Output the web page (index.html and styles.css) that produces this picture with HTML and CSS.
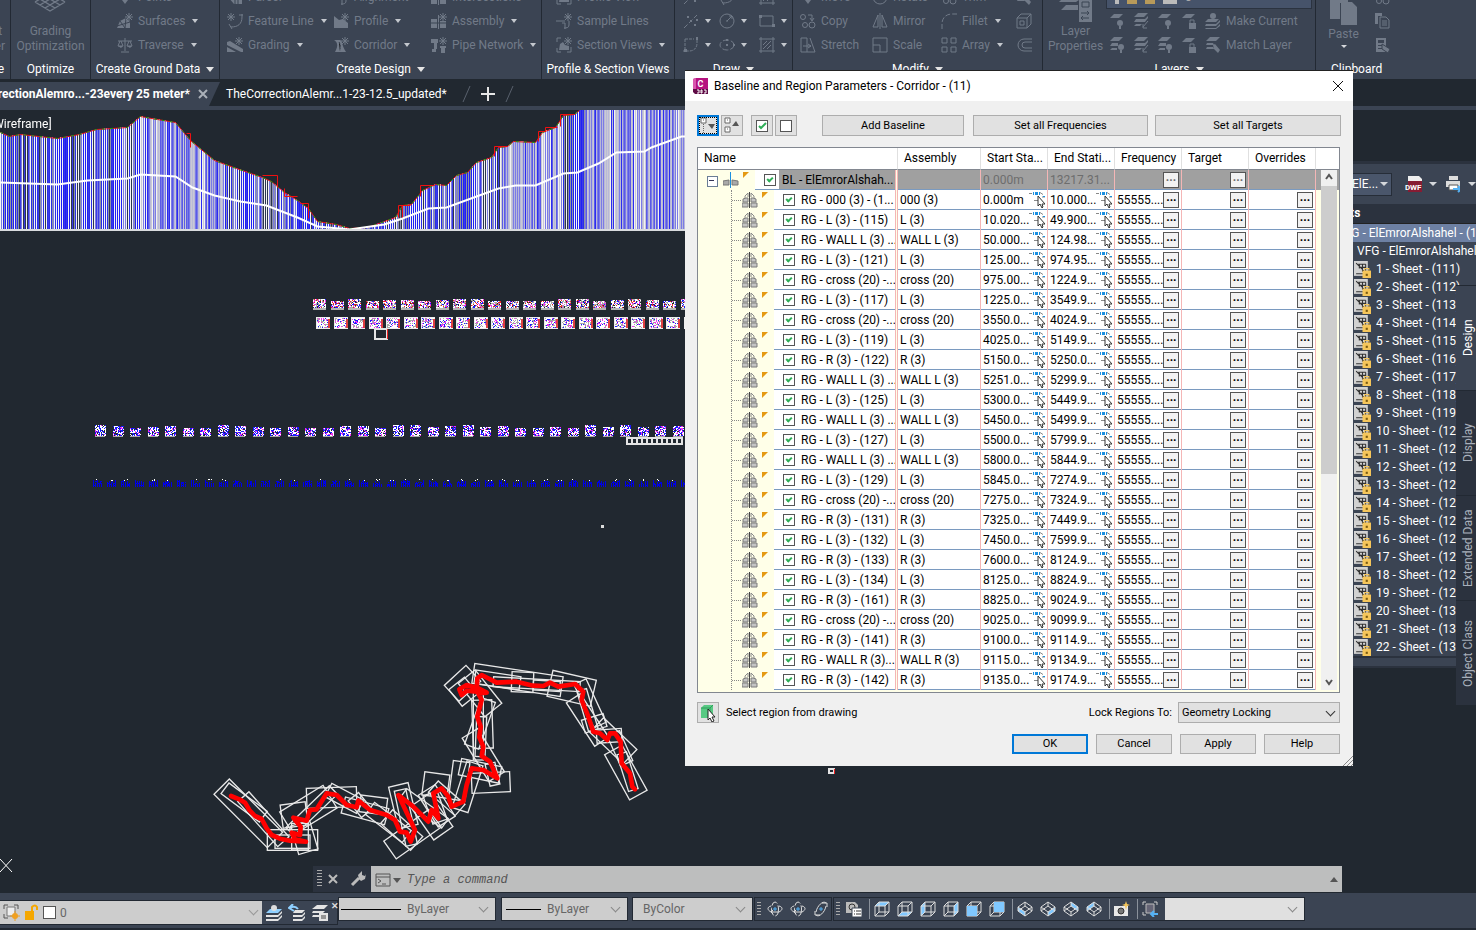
FILE: index.html
```html
<!DOCTYPE html>
<html lang="en">
<head>
<meta charset="utf-8">
<title>Baseline and Region Parameters - Corridor - (11)</title>
<link rel="stylesheet" href="styles.css">
</head>
<body>
<svg class="defs" aria-hidden="true">
  <defs>
    <symbol id="star" viewBox="0 0 8 8"><path d="M4 0v8M0 4h8M1 1l6 6M7 1l-6 6" stroke="currentColor" fill="none"/></symbol>
    <symbol id="grid3d" viewBox="0 0 32 16"><path d="M1 4L16 13 31 4M6 1l15 9M11-2l15 9M26 1L11 10M21-2L6 7M1 4l5-3M31 4l-5-3" stroke="currentColor" fill="none" stroke-width="1.4"/></symbol>
    <symbol id="points" viewBox="0 0 16 16"><path d="M8 15l-3-4V4h6v7z" fill="currentColor"/></symbol>
    <symbol id="surf" viewBox="0 0 16 16"><path d="M0 15l3-7 6-3 4 4v6z" fill="currentColor"/><path d="M3 8l5 7 1-10M0 13l13-4" stroke="#3b4453" fill="none"/><use href="#star" x="8" y="0" width="8" height="8"/></symbol>
    <symbol id="trav" viewBox="0 0 16 16"><path d="M8 1v13M4 15h8M1 4h14M3 4L1 9h5L4 4M12 4l-2 5h5l-2-5" stroke="currentColor" fill="none"/><path d="M1 9h5l-2 2zM10 9h5l-2 2z" fill="currentColor"/></symbol>
    <symbol id="parcel" viewBox="0 0 16 16"><path d="M1 8l6 7h8V5H4z" fill="currentColor"/><path d="M8 5v10M11 5v10" stroke="#3b4453"/></symbol>
    <symbol id="feat" viewBox="0 0 16 16"><path d="M15 1v3c0 7-4 10-11 10M12 2h4M2 11l3 5" stroke="currentColor" fill="none"/><use href="#star" x="0" y="0" width="8" height="8"/></symbol>
    <symbol id="grad" viewBox="0 0 16 16"><path d="M0 5l3-1 13 8v3h-2L0 8zM0 10l9 5H0z" fill="currentColor"/><use href="#star" x="8" y="0" width="8" height="8"/></symbol>
    <symbol id="prof" viewBox="0 0 16 16"><path d="M1 3l5 4 4-1 5 4v5H1z" fill="currentColor"/><use href="#star" x="8" y="0" width="8" height="8"/></symbol>
    <symbol id="corr" viewBox="0 0 16 16"><path d="M1 3h6c3 1 1 4 6 12H2C6 8 4 5 1 3z" fill="currentColor"/><path d="M6 5c2 3 1 5 1 9" stroke="#3b4453" stroke-dasharray="2 1"/><use href="#star" x="8" y="0" width="8" height="8"/></symbol>
    <symbol id="assy" viewBox="0 0 16 16"><path d="M0 6h6v9H0zM9 8h6v7H9zM7 2h1v14H7z" fill="currentColor"/><path d="M0 10h15" stroke="#3b4453"/><use href="#star" x="8" y="0" width="8" height="8"/></symbol>
    <symbol id="pipe" viewBox="0 0 16 16"><path d="M0 2h7v4H6v6H5v3H1v-3h2V6H0zM9 9h6v2h-1v5h-4v-5H9z" fill="currentColor"/><use href="#star" x="8" y="0" width="8" height="8"/></symbol>
    <symbol id="samp" viewBox="0 0 16 16"><path d="M0 8h9M13 8v4c0 3-3 3-5 3M6 10h3v6" stroke="currentColor" fill="none"/><use href="#star" x="8" y="0" width="8" height="8"/></symbol>
    <symbol id="sect" viewBox="0 0 16 16"><path d="M1 5V1h4M1 11v4h4M15 10v5h-4" stroke="currentColor" fill="none"/><path d="M3 13l1-6 3-2 2 3 4 1v4z" fill="currentColor"/><use href="#star" x="8" y="0" width="8" height="8"/></symbol>
    <symbol id="xline" viewBox="0 0 16 16"><path d="M1 15L14 2" stroke="currentColor" stroke-dasharray="5 2"/><path d="M4 3h2v2H4zM11 11h2v2h-2zM7 7h2v2H7zM13 6h2v2h-2z" fill="currentColor"/></symbol>
    <symbol id="circ" viewBox="0 0 16 16"><circle cx="8" cy="8" r="7" stroke="currentColor" fill="none"/><path d="M8 8l5-5M7 8h2M10 3h3v3" stroke="currentColor" fill="none"/></symbol>
    <symbol id="rect" viewBox="0 0 16 16"><path d="M1 3h13v10H1z" stroke="currentColor" fill="none"/><path d="M0 2h3v3H0zM13 11h3v3h-3z" fill="currentColor"/></symbol>
    <symbol id="arc" viewBox="0 0 16 16"><path d="M2 2h9M2 2v12M14 3v3c0 5-3 8-8 8H0" stroke="currentColor" fill="none" stroke-dasharray="3 1"/><path d="M13 0h2v3h-2zM1 12h3v3H1z" fill="currentColor"/></symbol>
    <symbol id="elli" viewBox="0 0 16 16"><ellipse cx="8" cy="8" rx="7" ry="5" stroke="currentColor" fill="none" stroke-dasharray="6 2"/><path d="M7 7h2v2H7zM7 2h2v2H7zM14 7h2v2h-2z" fill="currentColor"/></symbol>
    <symbol id="hatch" viewBox="0 0 16 16"><path d="M2 0v16M14 0v16M0 2h16M0 14h16M4 8l4-4M4 12l8-8M8 12l4-4" stroke="currentColor" fill="none"/></symbol>
    <symbol id="copy" viewBox="0 0 16 16"><circle cx="3" cy="4" r="2.500" stroke="currentColor" fill="none"/><circle cx="5" cy="12" r="2.500" stroke="currentColor" fill="none"/><circle cx="12" cy="12" r="3" stroke="currentColor" fill="none"/><path d="M8 2h4v5M10 5l2 3 2-3" stroke="currentColor" fill="none"/></symbol>
    <symbol id="stre" viewBox="0 0 16 16"><path d="M1 1h6v14H1zM10 1l5 14H7M3 9h8M8 7l3 2-3 2" stroke="currentColor" fill="none"/></symbol>
    <symbol id="mirr" viewBox="0 0 16 16"><path d="M6 2v12H1zM10 2v12h5zM8 0v16" stroke="currentColor" fill="none"/></symbol>
    <symbol id="scale" viewBox="0 0 16 16"><path d="M1 8V1h14v14H8M1 8h7v7H1z" stroke="currentColor" fill="none"/></symbol>
    <symbol id="fill" viewBox="0 0 16 16"><path d="M1 16v-5C1 5 5 1 11 1h5" stroke="currentColor" fill="none" stroke-dasharray="5 2"/></symbol>
    <symbol id="arr" viewBox="0 0 16 16"><path d="M1 1h5v5H1zM10 1h5v5h-5zM1 10h5v5H1zM10 10h5v5h-5z" stroke="currentColor" fill="none"/></symbol>
    <symbol id="box" viewBox="0 0 16 16"><path d="M1 5h10v10H1zM4 8h4v4H4zM1 5l4-4h10v10l-4 4M11 5l4-4" stroke="currentColor" fill="none"/></symbol>
    <symbol id="offs" viewBox="0 0 16 16"><path d="M16 2H8a6 6 0 000 12h8M16 5H9a3 3 0 000 6h7" stroke="currentColor" fill="none"/></symbol>
    <symbol id="lay" viewBox="0 0 16 16"><path d="M5 1h9l-4 4H1z" fill="currentColor"/><circle cx="11" cy="10" r="3" fill="currentColor"/><path d="M10 13h2v3h-2z" fill="currentColor"/></symbol>
    <symbol id="lays" viewBox="0 0 16 16"><path d="M5 0h10l-4 4H1zM3 6h9l3-3v2l-3 4H1zM3 11h6l-2 2H1z" fill="currentColor"/><path d="M15 8l-5 6M10 11v4h4" stroke="currentColor" fill="none"/></symbol>
    <symbol id="layb" viewBox="0 0 16 16"><path d="M5 0h9l-4 4H1zM3 6h6v3H1zM3 11h5v2H1z" fill="currentColor"/><circle cx="12" cy="10" r="3" fill="currentColor"/><path d="M11 13h2v3h-2z" fill="currentColor"/></symbol>
    <symbol id="lock" viewBox="0 0 16 16"><path d="M5 1h9l-4 4H1zM8 10h7v6H8z" fill="currentColor"/><path d="M9 10V7h4v3" stroke="currentColor" fill="none"/></symbol>
    <symbol id="mkc" viewBox="0 0 16 16"><circle cx="8" cy="3" r="3" fill="currentColor"/><path d="M3 6h11l-3 3H0zM1 11h10l4-4v2l-4 4H0zM1 15h10l4-4v2l-4 3H0z" fill="currentColor"/></symbol>
    <symbol id="match" viewBox="0 0 16 16"><path d="M5 0h10l-4 4H1zM2 6h6l1 2H1zM2 10h6l1 2H1zM8 8l2-1 5 6-2 3-4-4z" fill="currentColor"/></symbol>
    <symbol id="page" viewBox="0 0 16 16"><path d="M1 0h7v3H4v8H1z" fill="currentColor"/><path d="M6 4h6l3 3v8H6zM8 8h5M8 10h5M8 12h5" stroke="currentColor" fill="none"/></symbol>
    <symbol id="mprop" viewBox="0 0 16 16"><path d="M2 1h10v14H2zM4 3v3h6V3zM4 8v1h6V8zM4 11v1h4v-1z" fill="currentColor" fill-rule="evenodd"/><path d="M8 7l8 5-2 4-6-4z" fill="currentColor" stroke="#3b4453"/></symbol>
    <symbol id="lprop" viewBox="0 0 34 28"><path d="M6-4h14v8l-3 2H0l6-6zM2 14l5-5h12v5zM20 3h13v23H20z" fill="currentColor"/><path d="M23 6h7v5h-7zM22 17h8M28 15l2 2-2 2M30 22h-8M24 20l-2 2 2 2" stroke="#3b4453" fill="none"/></symbol>
    <symbol id="paste" viewBox="0 0 28 28"><path d="M0-4h18v8h-8v16H0zM11 3h11l5 5v18H11z" fill="currentColor"/></symbol>
    <symbol id="asm" viewBox="0 0 16 16"><path d="M1 7l3-1h2v4H1zM0 11h6v4H0zM9 6h2l3 1v3H9zM9 11h6v4H9z" fill="#c4c4c4" stroke="#7c7c7c"/><path d="M3 6V4l3-3v4M12 6V4L9 1v4" fill="none" stroke="#8a8a8a"/><path d="M7.500 0v16" stroke="#444"/></symbol>
    <symbol id="bl" viewBox="0 0 16 16"><path d="M0 9l6-1v5H0zM9 8l6 1v4H9z" fill="#a9a9a9" stroke="#777"/><path d="M7.500 0v16" stroke="#1b8fe0"/></symbol>
    <symbol id="pick" viewBox="0 0 16 17"><path d="M0 2.500h3M13 6h3M11 1.500l3 2M5 9.500h4" stroke="#888"/><path d="M4 1h1v3H4zM6 1h3v3H6zM10 1h1v3h-1zM14 5h2v1h-2z" fill="#1b8fe0"/><path d="M9 5v10l2-2 2 4 1-1-1-3h3z" fill="#fff" stroke="#333"/></symbol>
    <symbol id="orbit" viewBox="0 0 16 16"><ellipse cx="8" cy="8" rx="3.500" ry="7" fill="none" stroke="#ddd" stroke-dasharray="8 2"/><path d="M4 5C0 6 0 9 4 11l8 0c4-2 4-5 0-6M6 13l-2-2 2-2" fill="none" stroke="#ddd"/><path d="M8 6v4M6 8h4" stroke="#55b2f5"/></symbol>
    <symbol id="orbit2" viewBox="0 0 16 16"><path d="M13 2C10-1 4 5 3 11M3 14c3 3 9-3 10-9M9 2h5v4M7 14H2v-4" fill="none" stroke="#ddd"/><path d="M8 6v4M6 8h4" stroke="#55b2f5"/></symbol>
    <symbol id="cube" viewBox="0 0 16 16"><path d="M1 5h10v10H1zM5 1h10v10H5zM1 5l4-4M11 5l4-4M1 15l4-4M11 15l4-4" fill="none" stroke="#ddd"/></symbol>
    <symbol id="iso" viewBox="0 0 16 16"><path d="M8 1l7 5v4l-7 5-7-5V6zM1 6l7 5 7-5M8 11v4M8 1v4L1 10M8 5l7 5" fill="none" stroke="#ddd"/></symbol>
    <symbol id="sheet" viewBox="0 0 16 16"><path d="M0 0h13v14H0z" fill="#d2d2d2"/><path d="M2 2l9 9M11 3v9H2M4 3h7M5 3v4M8 3v7M5 6h6" stroke="#333" fill="none"/><path d="M8 9h8v7H8z" fill="#f6c65a"/><path d="M10 9V7h4v2" stroke="#f6c65a" fill="none"/><path d="M11 12h2v2h-2z" fill="#7a5a10"/></symbol>
    <symbol id="stack" viewBox="0 0 18 18"><path d="M5 5h12l-4 4H1z" fill="#8fd0ff"/><path d="M1 11h12l4-4v2l-4 4H1zM1 15h12l4-4v2l-4 4H1z" fill="#e4e4e4"/></symbol>
  </defs>
</svg>

<div class="app">
<header class="ribbon">
  <section class="panel p-explore">
    <div class="body"><button class="big">Project<br>Explorer</button></div><h2>Explore</h2>
  </section>
  <section class="panel p-opt">
    <div class="body"><button class="big"><svg width="32" height="16"><use href="#grid3d"/></svg><span class="cap">Grading<br>Optimization</span></button></div><h2>Optimize</h2>
  </section>
  <section class="panel p-ground">
    <div class="body"><div class="col"><button class="it"><svg><use href="#points"/></svg>Points</button><button class="it more"><svg><use href="#surf"/></svg>Surfaces</button><button class="it more"><svg><use href="#trav"/></svg>Traverse</button></div></div><h2 class="drop">Create Ground Data</h2>
  </section>
  <section class="panel p-design">
    <div class="body">
      <div class="col c1"><button class="it more"><svg><use href="#parcel"/></svg>Parcel</button><button class="it more"><svg><use href="#feat"/></svg>Feature Line</button><button class="it more"><svg><use href="#grad"/></svg>Grading</button></div>
      <div class="col c2"><button class="it more"><svg><use href="#samp"/></svg>Alignment</button><button class="it more"><svg><use href="#prof"/></svg>Profile</button><button class="it more"><svg><use href="#corr"/></svg>Corridor</button></div>
      <div class="col"><button class="it"><svg><use href="#assy"/></svg>Intersections</button><button class="it more"><svg><use href="#assy"/></svg>Assembly</button><button class="it more"><svg><use href="#pipe"/></svg>Pipe Network</button></div>
    </div><h2 class="drop">Create Design</h2>
  </section>
  <section class="panel p-views">
    <div class="body"><div class="col"><button class="it"><svg><use href="#sect"/></svg>Profile View</button><button class="it"><svg><use href="#samp"/></svg>Sample Lines</button><button class="it more"><svg><use href="#sect"/></svg>Section Views</button></div></div><h2>Profile &amp; Section Views</h2>
  </section>
  <section class="panel p-draw">
    <div class="body">
      <div class="col d1"><button class="it more" aria-label="Line"><svg><use href="#xline"/></svg></button><button class="it more" aria-label="Construction line"><svg><use href="#xline"/></svg></button><button class="it more" aria-label="Arc"><svg><use href="#arc"/></svg></button></div>
      <div class="col d2"><button class="it" aria-label="Polyline"><svg><use href="#feat"/></svg></button><button class="it more" aria-label="Circle"><svg><use href="#circ"/></svg></button><button class="it more" aria-label="Ellipse"><svg><use href="#elli"/></svg></button></div>
      <div class="col"><button class="it" aria-label="Table"><svg><use href="#hatch"/></svg></button><button class="it more" aria-label="Rectangle"><svg><use href="#rect"/></svg></button><button class="it more" aria-label="Hatch"><svg><use href="#hatch"/></svg></button></div>
    </div><h2 class="drop">Draw</h2>
  </section>
  <section class="panel p-modify">
    <div class="body">
      <div class="col m1"><button class="it"><svg><use href="#points"/></svg>Move</button><button class="it"><svg><use href="#copy"/></svg>Copy</button><button class="it"><svg><use href="#stre"/></svg>Stretch</button></div>
      <div class="col m2"><button class="it"><svg><use href="#circ"/></svg>Rotate</button><button class="it"><svg><use href="#mirr"/></svg>Mirror</button><button class="it"><svg><use href="#scale"/></svg>Scale</button></div>
      <div class="col m3"><button class="it more"><svg><use href="#copy"/></svg>Trim</button><button class="it more"><svg><use href="#fill"/></svg>Fillet</button><button class="it more"><svg><use href="#arr"/></svg>Array</button></div>
      <div class="col"><button class="it" aria-label="Erase"><svg><use href="#match"/></svg></button><button class="it" aria-label="Explode"><svg><use href="#box"/></svg></button><button class="it" aria-label="Offset"><svg><use href="#offs"/></svg></button></div>
    </div><h2 class="drop">Modify</h2>
  </section>
  <section class="panel p-layers">
    <div class="body">
      <button class="big lp"><svg width="34" height="28"><use href="#lprop"/></svg><span>Layer<br>Properties</span></button>
      <div class="layers">
        <div class="lcombo"><i class="bulb"></i><i class="sun"></i><i class="lk"></i><i class="sw"></i>0</div>
        <div class="lrow"><svg><use href="#lay"/></svg><svg><use href="#lays"/></svg><svg><use href="#lay"/></svg><svg><use href="#lock"/></svg><button class="it"><svg><use href="#mkc"/></svg>Make Current</button></div>
        <div class="lrow"><svg><use href="#layb"/></svg><svg><use href="#lays"/></svg><svg><use href="#layb"/></svg><svg><use href="#lock"/></svg><button class="it"><svg><use href="#match"/></svg>Match Layer</button></div>
      </div>
    </div><h2 class="drop">Layers</h2>
  </section>
  <section class="panel p-clip">
    <div class="body">
      <button class="big paste"><svg width="28" height="28"><use href="#paste"/></svg><span>Paste</span><i class="caret"></i></button>
      <div class="col"><button class="it" aria-label="Cut"><svg><use href="#copy"/></svg></button><button class="it" aria-label="Copy"><svg><use href="#page"/></svg></button><button class="it" aria-label="Match properties"><svg><use href="#mprop"/></svg></button></div>
    </div><h2>Clipboard</h2>
  </section>
</header>

<nav class="tabs">
  <div class="tab on"><span>TheCorrectionAlemro...-23every 25 meter*</span><button aria-label="Close tab"><svg width="10" height="10"><path d="M1 1l8 8M9 1L1 9" stroke="#aab0b8" stroke-width="2"/></svg></button></div>
  <svg class="slope" width="12" height="24"><path d="M0 0h11L0 24z" fill="#3b4453"/></svg>
  <a class="tab2" href="#">TheCorrectionAlemr...1-23-12.5_updated*</a>
  <svg width="52" height="24"><path d="M8 4L1 20M51 4l-7 16" stroke="#59616d"/><path d="M26 5v14M19 12h14" stroke="#e6e6e6" stroke-width="2"/></svg>
</nav>

<main class="work">
  <canvas id="view" width="1340" height="756"></canvas>
  <svg class="route" id="route" width="460" height="210" viewBox="0 0 1380 630"></svg>
  <span class="wire">[Wireframe]</span>
  <svg class="ucs" width="13" height="14"><path d="M0 0l12 13M12 0L0 13" stroke="#fff"/></svg>
  <aside class="space">
    <div class="stool"><div class="scombo"><span>ElE...</span><i class="caret"></i></div>
      <svg width="18" height="18"><path d="M1 1h11l4 4v4H1z" fill="#eee"/><path d="M1 6h16v11H1z" fill="#861c33"/></svg><b class="dwf">DWF</b><i class="caret"></i>
      <svg width="18" height="18"><path d="M4 1h9v4H4zM1 6h15v6H1z" fill="#ddd"/><path d="M4 10h9v5H4z" fill="#fff" stroke="#555"/><path d="M8 14h8M13 11l3 3-3 3" stroke="#55b2f5" stroke-width="2" fill="none"/></svg><i class="caret"></i></div>
    <div class="shead">Sheets</div>
    <ul id="sheets"><li class="cur">VFG - ElEmrorAlshahel - (11)</li><li class="vfg">VFG - ElEmrorAlshahel</li></ul>
    <div class="sfoot"></div>
  </aside>
  <div class="vtabs"><button>Design</button><button>Display</button><button>Extended Data</button><button>Object Class</button></div>
  <div class="cmd">
    <div class="cmdl"><i class="grip"></i><svg width="10" height="10"><path d="M1 1l8 8M9 1L1 9" stroke="#bbb" stroke-width="2"/></svg><svg width="16" height="16"><path d="M2 14l7-7" stroke="#bbb" stroke-width="3"/><path d="M9 8L8 4l4-4v4l3 1 1-2-1 5-4 2z" fill="#bbb"/></svg></div>
    <label class="cmdr"><svg width="26" height="14"><path d="M1 1h14v12H1zM1 4h14M3 6l3 2-3 2M7 11h4" fill="none" stroke="#555"/><path d="M18 5h8l-4 5z" fill="#555"/></svg><input type="text" placeholder="Type a command" aria-label="Command"><i class="up"></i></label>
  </div>
</main>

<footer class="bar">
  <div class="lbar">
    <div class="lsel"><svg width="17" height="17"><path d="M1 5V1h4M11 1h4v4M1 10v4h4" fill="none" stroke="#555"/><path d="M4 3h8v9H4z" fill="#eee" stroke="#777"/><circle cx="12" cy="12" r="3" fill="#f0a020"/><path d="M12 7v10M7 12h10" stroke="#f0a020"/></svg><svg width="15" height="17"><path d="M1 7h9v9H1z" fill="#f5a700"/><path d="M8 7V3q3-3 5 0v3" fill="none" stroke="#f5a700" stroke-width="2"/></svg><i class="sq"></i><span>0</span><i class="chev"></i></div>
    <svg width="18" height="18"><use href="#stack"/><circle cx="9" cy="4" r="3" fill="#ddd"/></svg><svg width="18" height="18"><path d="M7 6h10l-3 3H5zM5 11h9l3-3v2l-3 3H5zM5 15h9l3-3v2l-3 3H5z" fill="#e4e4e4"/><path d="M10 5Q7 1 2 4M5 0L1 4l5 3" fill="none" stroke="#8fd0ff" stroke-width="2"/></svg><svg width="18" height="18"><path d="M6 1h11l-4 4H1zM2 7h12l-2 2H1zM2 11h6v2H1zM8 9h9v8H8z" fill="#e4e4e4"/><path d="M10 12h5M10 14h5" stroke="#444"/></svg><b class="x">✕</b>
  </div>
  <label class="sel s1"><i class="line"></i><select aria-label="Linetype"><option>ByLayer</option></select></label>
  <label class="sel s2"><i class="line"></i><select aria-label="Lineweight"><option>ByLayer</option></select></label>
  <label class="sel s3"><select aria-label="Plot style"><option>ByColor</option></select></label>
  <div class="tools">
    <i class="grip"></i><svg><use href="#orbit"/></svg><svg><use href="#orbit"/></svg><svg><use href="#orbit2"/></svg></div>
  <div class="tools t2">
    <i class="grip"></i><svg><path d="M0 1h9l3 3v8H0z" fill="#bbb"/><circle cx="6" cy="6" r="3" fill="none" stroke="#333"/><path d="M6 7h10v9H6z" fill="#fff" stroke="#3b4453"/><path d="M8 10h1M10 10h5M8 13h1M10 13h5" stroke="#333"/></svg><i class="sep"></i>
    <svg><path d="M1 5l4-4h10l-4 4z" fill="#80c8ff"/><use href="#cube"/></svg><svg><path d="M1 15l4-4h10l-4 4z" fill="#80c8ff"/><use href="#cube"/></svg><svg><path d="M1 5l4-4v10l-4 4z" fill="#80c8ff"/><use href="#cube"/></svg><svg><path d="M11 5l4-4v10l-4 4z" fill="#80c8ff"/><use href="#cube"/></svg><svg><use href="#cube"/><path d="M1 5h10v10H1z" fill="#80c8ff"/></svg><svg><use href="#cube"/><path d="M5 1h10v10H5z" fill="#80c8ff"/></svg><i class="sep"></i>
    <svg><path d="M1 6l7 5v4l-7-5z" fill="#80c8ff"/><use href="#iso"/></svg><svg><path d="M15 6l-7 5v4l7-5z" fill="#80c8ff"/><use href="#iso"/></svg><svg><path d="M8 1l7 5v4L8 5z" fill="#80c8ff"/><use href="#iso"/></svg><svg><path d="M8 1L1 6v4l7-5z" fill="#80c8ff"/><use href="#iso"/></svg><i class="sep"></i>
    <svg><path d="M0 5h14v10H0z" fill="#e8e8e8"/><circle cx="7" cy="10" r="3" fill="#777" stroke="#333"/><path d="M12 0l1 3 3 1-3 1-1 4-1-4-3-1 3-1z" fill="#f6c65a"/></svg><i class="sep"></i>
    <svg><path d="M1 4V1h3M12 1h3v3M1 11v3h3" fill="none" stroke="#ccc"/><path d="M4 3h8v9H4z" fill="#667" stroke="#bbb"/><path d="M16 13H9M12 10l-3 3 3 3" stroke="#55b2f5" stroke-width="2" fill="none"/></svg>
    <label class="sel s4"><select aria-label="View"><option></option></select></label>
  </div>
</footer>
</div>

<div class="dialog" role="dialog" aria-labelledby="dt">
  <div class="title"><svg width="15" height="16"><path d="M0 1l3-1h12v12H0z" fill="#b5127f"/><path d="M0 1l3-1v12H0z" fill="#d957ae"/><path d="M0 11h15v5H2l-2-2z" fill="#5e0a45"/><path d="M4 12h2v3H4M8 12h1v3H8zM11 12h2v3h-2" fill="none" stroke="#fff"/></svg><b class="logo">C</b><span id="dt">Baseline and Region Parameters - Corridor - (11)</span><button class="close" aria-label="Close"><svg width="12" height="12"><path d="M1 1l10 10M11 1L1 11" stroke="#111"/></svg></button></div>
  <div class="dtools">
    <button class="sq2 focus" aria-label="Expand all"><svg width="18" height="18"><path d="M2 1h5v5H2zM4 3h1" fill="#fff" stroke="#666"/><path d="M4.500 7v10" stroke="#666" stroke-dasharray="1 1"/><path d="M9 7h7l-3 5z" fill="#555"/></svg></button>
    <button class="sq2" aria-label="Collapse all"><svg width="18" height="18"><path d="M2 1h5v5H2zM4 3h1M2 10h5v5H2zM4 12h1" fill="#fff" stroke="#666"/><path d="M9 9h7l-3-5z" fill="#555"/></svg></button>
    <button class="sq2 gap" aria-label="Select all"><i class="cb"><svg width="10" height="10"><path d="M2 5l2 2 5-5" stroke="#2eae57" stroke-width="2" fill="none"/></svg></i></button>
    <button class="sq2" aria-label="Clear all"><i class="cb"></i></button>
    <button class="wide w1">Add Baseline</button><button class="wide w2">Set all Frequencies</button><button class="wide w3">Set all Targets</button>
  </div>
  <div class="frame">
    <table><colgroup><col class="k1"><col class="k2"><col class="k3"><col class="k3"><col class="k3"><col class="k3"><col class="k3"><col></colgroup>
      <thead><tr><th>Name</th><th>Assembly</th><th>Start Sta...</th><th>End Stati...</th><th>Frequency</th><th>Target</th><th>Overrides</th><th></th></tr></thead>
      <tbody id="rows"></tbody></table>
    <div class="scroll"><svg width="16" height="16"><path d="M5 9l3-4 3 4" stroke="#555" stroke-width="2" fill="none"/></svg><i></i><svg width="16" height="16"><path d="M5 6l3 4 3-4" stroke="#555" stroke-width="2" fill="none"/></svg></div>
  </div>
  <div class="opts"><button class="sq2" aria-label="Select region from drawing"><svg width="18" height="18"><path d="M2 4l3-3h9v10l-3 3H2z" fill="#58c983"/><path d="M2 4h9v10M11 4l3-3" stroke="#2f9d5a" fill="none"/><path d="M9 5v11l2-2 2 4 2-1-2-4h3z" fill="#fff" stroke="#222"/></svg></button><span>Select region from drawing</span><label for="lk">Lock Regions To:</label><span class="gl"><select id="lk"><option>Geometry Locking</option></select></span></div>
  <div class="acts"><button class="ok">OK</button><button>Cancel</button><button>Apply</button><button>Help</button></div>
  <svg class="size" width="10" height="10"><path d="M0 10L10 0M4 10l6-6M8 10l2-2" stroke="#888"/></svg>
</div>
<script src="app.js"></script>
</body>
</html>
```
FILE: styles.css
```css
*{box-sizing:border-box}
body{margin:0;background:#212830;font:12px Roboto,"Open Sans",sans-serif;color:#fff;height:100vh;overflow:hidden;position:relative}
button,input,select{font:inherit;color:inherit;background:none;border:0;padding:0;margin:0;border-radius:0}
.defs{position:absolute;width:0;height:0}
.app{height:100vh;display:flex;flex-direction:column}
.caret{width:0;height:0;border:4px solid transparent;border-top-color:#d5d8dc;border-bottom:0;flex:none}

.ribbon{display:flex;height:79px;background:#3b4453;overflow:hidden;flex:none}
.panel{display:flex;flex-direction:column;justify-content:flex-end;border-right:1px solid #222933;flex:none;overflow:hidden;white-space:nowrap}
.panel h2{margin:0;font:12px/20px Roboto,sans-serif;height:22px;padding-top:2px;display:flex;justify-content:center;align-items:center;gap:6px;flex:none}
.panel h2.drop::after{content:"";border:4px solid transparent;border-top:5px solid #e5e5e5;border-bottom:0}
.body{display:flex;align-items:flex-end;flex:none;color:#717a88}
.col{display:flex;flex-direction:column}
.it{height:24px;display:flex;align-items:center;gap:5px;white-space:nowrap;text-align:left}
.it svg,.lrow>svg{width:16px;height:16px;flex:none;overflow:hidden}
.it.more::after{content:"";border:3px solid transparent;border-top:4px solid #c4c8ce;border-bottom:0;margin-left:2px}
.big{display:flex;flex-direction:column;align-items:center;line-height:15px;padding-bottom:3px;text-align:center}
.cap{padding-top:10px}
.p-explore{width:11px}
.p-explore .big{display:block}
.p-explore .body,.p-explore h2{justify-content:flex-end;padding-right:5px}
.p-explore h2{padding-right:6px}
.p-opt{width:80px}.p-opt .body{justify-content:center}
.p-ground{width:129px}.p-ground .body{padding-left:26px}
.p-design{width:322px}.p-design .body{padding-left:7px}
.c1{width:106px}.c2{width:98px}
.p-views{width:133px}.p-views .body{padding-left:14px}
.p-draw{width:118px}.p-draw .body{padding-left:8px}
.d1{width:36px}.d2{width:40px}
.p-draw .more::after{margin-left:1px}
.p-modify{width:250px}.p-modify .body{padding-left:7px}
.m1{width:72px}.m2{width:69px}.m3{width:75px}
.p-layers{width:273px}
.p-layers .body{padding-left:4px}
.lp{width:57px}
.layers{padding-left:2px}
.lcombo{width:206px;height:24px;background:#46536a;border:1px solid #2b3340;display:flex;align-items:center;gap:8px;padding-left:8px;color:#aaa}
.lcombo i{width:10px;height:14px;background:#b89a5a}
.lcombo .bulb{width:4px;background:#bbb}.lcombo .sw{width:14px;background:#bbb}
.lrow{display:flex;align-items:center;gap:8px;height:24px;padding-left:3px}
.p-clip{flex:1;border:0}
.p-clip .body{padding-left:13px;gap:16px}
.p-clip h2{justify-content:flex-start;padding-left:15px}
.paste{width:29px;padding-bottom:9px}.paste .caret{border-width:3px 3px 0;margin-top:3px}

.tabs{height:31px;border-bottom:4px solid #3b4453;display:flex;align-items:flex-end;padding-top:3px;flex:none}
.tabs>*{flex:none}
.tab{width:209px;height:24px;background:#3b4453;display:flex;align-items:center;justify-content:flex-end;gap:8px;padding-right:1px;overflow:hidden;white-space:nowrap;font-weight:700}
.tab button{line-height:0}
.tab2{color:#fff;text-decoration:none;line-height:24px;width:241px;padding-left:5px;white-space:nowrap}

.work{position:relative;flex:1;min-height:0;overflow:hidden}
#view{position:absolute;left:0;top:0}
.route{position:absolute;left:200px;top:540px}
.wire{position:absolute;left:-10px;top:7px}
.ucs{position:absolute;left:0;bottom:20px}
.space{position:absolute;right:0;top:51px;width:160px;background:#3b4453;border-top:3px solid #2b323e;white-space:nowrap;overflow:hidden}
.stool{height:40px;display:flex;align-items:center;gap:8px;padding-left:20px}
.scombo{width:65px;height:23px;background:#4a566b;border:1px solid #262d38;display:flex;align-items:center;justify-content:space-between;padding:0 3px 0 15px;margin-right:7px}
.dwf{font-size:8px;margin-left:-25px;padding-top:6px}
.shead{height:20px;background:#2b323e;font-weight:700;line-height:18px;padding-left:7px;border-bottom:1px solid #222}
#sheets{list-style:none;margin:0;padding:0}
#sheets li{height:18px;line-height:18px;display:flex;gap:5px;align-items:center;padding-left:38px}
#sheets .cur{background:#6d80a3;padding-left:21px}
#sheets .vfg{padding-left:41px}
#sheets svg{width:17px;height:17px}
.sfoot{height:12px;border-top:2px solid #2b323e;border-bottom:2px solid #2b323e}
.vtabs{position:absolute;right:0;top:175px;width:20px;display:flex;flex-direction:column}
.vtabs button{writing-mode:vertical-rl;transform:rotate(180deg);height:105px;width:20px;background:#2b323e;color:#a9b0bb;border-bottom:1px solid #222933;line-height:16px;padding-right:3px}
.vtabs button:first-child{background:#3b4453;color:#fff}
.cmd{position:absolute;left:313px;right:134px;bottom:1px;height:26px;display:flex}
.cmdl{width:58px;background:#2b323e;display:flex;align-items:center;gap:12px;padding-left:4px}
.cmdl .grip{margin-right:-6px;height:18px}
.grip{width:5px;height:14px;background:repeating-linear-gradient(#aaa 0 1px,transparent 1px 3px);flex:none}
.cmdr{flex:1;background:#bdbebe;display:flex;align-items:center;gap:6px;padding:1px 4px 0}
.cmdr input{flex:1;font:italic 12px "Liberation Mono",monospace;color:#555;outline:0}
.cmdr input::placeholder{color:#555;opacity:1}
.up{border:4px solid transparent;border-bottom:5px solid #555;border-top:0}

.bar{height:37px;background:#3b4453;border-bottom:2px solid #222933;flex:none;display:flex;align-items:flex-start;padding-top:4px;color:#666}
.bar>*{flex:none}
.lbar{display:flex;align-items:center;width:338px;height:25px;margin-top:3px;border:1px solid #222933;border-left:0;gap:5px;background:#3b4453}
.lbar>svg{flex:none}
.lsel{width:262px;height:23px;background:#cdcdcd;display:flex;align-items:center;gap:4px;padding:0 5px 0 3px;margin-right:-2px;flex:none}
.lsel span{flex:1}
.sq{width:13px;height:13px;background:#fff;border:1px solid #555}
.chev{width:7px;height:7px;border:1px solid #999;border-top:0;border-left:0;transform:rotate(45deg);margin-bottom:4px}
.x{color:#ddd;font-size:9px;align-self:flex-start;margin-left:-3px;line-height:10px}
.sel{height:24px;border:1px solid #222933;background:#cdcdcd;display:flex;align-items:center;position:relative}
.sel select,.gl select{appearance:none;flex:1;height:100%}
.sel::after,.gl::after{content:"";position:absolute;right:8px;top:6px;width:6px;height:6px;border:1px solid #888;border-top:0;border-left:0;transform:rotate(45deg)}
.line{height:1px;background:#000}
.s1{width:158px}.s1 .line{width:60px;margin:0 6px 0 2px}
.s2{width:127px;margin-left:5px}.s2 .line{width:35px;margin:0 6px 0 4px}
.s3{width:121px;margin-left:4px}.s3 select{padding-left:10px}
.tools{display:flex;align-items:center;gap:7px;height:24px;padding-left:2px;border:1px solid #222933;margin-left:1px;width:78px}
.tools svg{width:16px;height:16px;flex:none}
.tools .grip{width:4px;margin-right:-1px}
.t2{width:472px}
.sep{width:1px;height:20px;background:#8a919b;margin-right:-3px}
.s4{flex:1;height:22px;background:#e0e0e0;border:0}

.dialog{position:absolute;left:685px;top:70px;width:668px;background:#f0f0f0;color:#000;border-top:1px solid #222;font-size:12px;padding-bottom:12px}
.title{background:#fff;height:30px;display:flex;align-items:center;gap:6px;padding:0 8px}
.logo{width:15px;margin-left:-21px;color:#fff;font-size:9px;text-align:center;padding-bottom:4px}
.title #dt{flex:1}
.close{line-height:0;padding:1px}
.dtools{display:flex;padding:14px 12px 11px;gap:2px;font-size:11px}
.dialog button:not(.close){background:#e1e1e1;border:1px solid #adadad}
.sq2{width:22px;height:21px;display:flex;align-items:center;justify-content:center}
.dialog .sq2.focus.sq2{border:2px solid #0078d7;outline:1px dotted #000;outline-offset:-3px}
.gap{margin-left:6px}
.cb{width:12px;height:12px;background:#fff;border:1px solid #555;display:block;line-height:0}
.w1{width:142px;margin-left:23px}.w2{width:175px;margin-left:7px}.w3{flex:1;margin-left:5px}
.frame{margin:0 13px 0 12px;border:1px solid #828790;height:546px;background:#ffffe8;position:relative;overflow:hidden}
table{border-collapse:separate;border-spacing:0;table-layout:fixed;width:100%}
.k1{width:200px}.k2{width:83px}.k3{width:67px}
th{font-weight:400;text-align:left;background:#fff;height:22px;padding:0 0 1px 6px;border-right:1px solid #e0e0e0;border-bottom:1px solid #828790;white-space:nowrap}
th:last-child{border-right:0}
td{height:20px;padding:0;border-right:1px solid #f4b6b6;background:#fff;white-space:nowrap;overflow:hidden}
td:last-child{border:0;background:#ffffe8}
td>div{height:20px;border-bottom:1px solid #7a9ac0;display:flex;align-items:center;padding:0 2px;justify-content:space-between}
td:last-child>div{border:0}
td:first-child{background:#ffffe8;border-right:3px double #f4b6b6}
td>div.nm{padding:0;border:0;justify-content:flex-start}
.tree{width:76px;height:20px;flex:none;display:flex;align-items:center;position:relative;padding-left:44px}
.tree::before{content:"";position:absolute;left:33px;top:0;height:20px;width:10px;border-left:1px dotted #888;background:repeating-linear-gradient(90deg,#888 0 1px,transparent 1px 2px) 0 10px/10px 1px no-repeat}
.flag{width:0;height:0;position:absolute;right:6px;top:2px;border-top:6px solid #e59a12;border-right:6px solid transparent}
.tree svg{width:16px;height:16px}
.leaf{flex:1;height:20px;background:#fff;border-bottom:1px solid #7a9ac0;display:flex;align-items:center;gap:6px;padding-left:9px}
.leaf input{appearance:none;width:12px;height:12px;border:1px solid #555;background:#fff;margin:0;position:relative;flex:none}
.leaf input:checked::after{content:"";position:absolute;left:3px;top:1px;width:3px;height:5px;border:2px solid #2eae57;border-top:0;border-left:0;transform:rotate(45deg);box-sizing:content-box;width:2px;height:4px}
.pk{width:16px;height:17px;flex:none}
.dialog .dots.dots{width:16px;height:16px;background:#f2f2f2;border:1px solid #555;line-height:8px;padding-bottom:6px;font-weight:700;flex:none;margin-left:auto}
.base td{background:#a0a0a0;color:#6d6d6d}
.base td:first-child{background:#ffffe8;color:#000}
.base .tree{width:57px;padding-left:25px}
.base .tree::before{left:9px;top:6px;width:9px;height:9px;border:1px solid #6a7d95;background:linear-gradient(#335,#335) 1px 3px/5px 1px no-repeat #fff}
.base .leaf{background:#a0a0a0;padding-left:0;gap:0}
.base .chk{background:#fff;height:19px;display:flex;align-items:center;padding:0 3px 0 9px;margin-right:3px}
.scroll{position:absolute;right:2px;top:22px;bottom:2px;width:16px;background:#f0f0f0;display:flex;flex-direction:column;justify-content:space-between}
.scroll i{height:288px;background:#cdcdcd;margin-bottom:auto}
.opts{display:flex;align-items:center;padding:9px 13px 0 12px;gap:7px;font-size:11px}
.opts label{margin-left:auto}
.gl{width:162px;height:21px;border:1px solid #adadad;background:#e1e1e1;display:flex;position:relative;margin-left:-1px}
.gl select{padding-left:3px}
.gl::after{top:5px;right:5px;border-color:#333}
.acts{display:flex;justify-content:flex-end;gap:8px;padding:11px 13px 0;font-size:11px}
.acts button{width:76px;height:20px;line-height:16px}
.dialog .acts .ok.ok{border:2px solid #0078d7}
.size{position:absolute;right:0;bottom:0}
```
FILE: app.js
```js
const data = `000 (3) - (1...|000 (3)|0.000m|10.000...
L (3) - (115)|L (3)|10.020...|49.900...
WALL L (3) ...|WALL L (3)|50.000...|124.98...
L (3) - (121)|L (3)|125.00...|974.95...
cross (20) -...|cross (20)|975.00...|1224.9...
L (3) - (117)|L (3)|1225.0...|3549.9...
cross (20) -...|cross (20)|3550.0...|4024.9...
L (3) - (119)|L (3)|4025.0...|5149.9...
R (3) - (122)|R (3)|5150.0...|5250.0...
WALL L (3) ...|WALL L (3)|5251.0...|5299.9...
L (3) - (125)|L (3)|5300.0...|5449.9...
WALL L (3) ...|WALL L (3)|5450.0...|5499.9...
L (3) - (127)|L (3)|5500.0...|5799.9...
WALL L (3) ...|WALL L (3)|5800.0...|5844.9...
L (3) - (129)|L (3)|5845.0...|7274.9...
cross (20) -...|cross (20)|7275.0...|7324.9...
R (3) - (131)|R (3)|7325.0...|7449.9...
L (3) - (132)|L (3)|7450.0...|7599.9...
R (3) - (133)|R (3)|7600.0...|8124.9...
L (3) - (134)|L (3)|8125.0...|8824.9...
R (3) - (161)|R (3)|8825.0...|9024.9...
cross (20) -...|cross (20)|9025.0...|9099.9...
R (3) - (141)|R (3)|9100.0...|9114.9...
WALL R (3)...|WALL R (3)|9115.0...|9134.9...
R (3) - (142)|R (3)|9135.0...|9174.9...`.split('\n').map(r => r.split('|'));
const dots = '<button class="dots" aria-label="Edit">...</button>';
const pick = '<svg class="pk"><use href="#pick"/></svg>';
const td = s => `<td><div>${s}</div></td>`;
document.getElementById('rows').innerHTML =
  `<tr class="base"><td><div class="nm"><span class="tree"><svg><use href="#bl"/></svg><i class="flag"></i></span><label class="leaf"><span class="chk"><input type="checkbox" checked></span>BL - ElEmrorAlshah...</label></div></td>${td('')}${td('0.000m')}${td('13217.31...')}${td(dots)}${td(dots)}${td('')}${td('')}</tr>` +
  data.map(([n, a, s, e]) => `<tr><td><div class="nm"><span class="tree"><svg><use href="#asm"/></svg><i class="flag"></i></span><label class="leaf"><input type="checkbox" checked>RG - ${n}</label></div></td>${td(a)}${td(s + pick)}${td(e + pick)}${td('55555....' + dots)}${td(dots)}${td(dots)}${td('')}</tr>`).join('');

document.getElementById('sheets').insertAdjacentHTML('beforeend',
  Array.from({length: 22}, (_, i) => `<li><svg><use href="#sheet"/></svg>${i + 1} - Sheet - (${111 + i})</li>`).join(''));

let seed = 7;
const rnd = () => (seed = (seed * 16807) % 2147483647) / 2147483647;
const c = document.getElementById('view').getContext('2d');
c.translate(0, -110);
const ground = [0,132,9,136,20,134,57,138,79,134,96,129,127,127,140,116,157,119,175,122,190,140,214,160,236,168,262,177,271,181,284,192,297,200,308,208,317,221,336,224,349,228,367,227,384,221,395,217,402,205,411,204,422,190,435,184,446,185,456,175,467,172,476,162,491,157,498,147,507,146,513,141,535,142,542,132,555,127,563,115,574,114,579,110,685,110];
const mid = [0,182,57,184,87,180,127,178,140,174,175,176,192,187,214,195,240,201,266,205,297,217,317,226,349,229,384,224,402,218,428,208,446,207,476,196,498,188,515,185,535,185,563,173,577,172,598,163,616,152,644,151,651,147,681,136,685,136];
const at = (p, x) => { let i = 0; while (i < p.length - 4 && p[i + 2] < x) i += 2; return p[i + 1] + (p[i + 3] - p[i + 1]) * (x - p[i]) / (p[i + 2] - p[i]); };
for (let x = 0; x < 685; x++) {
  const soft = (x > 140 && x < 225) || (x > 500 && x < 560) || x > 585;
  const band = Math.sin(x / 9) + Math.sin(x / 4.3);
  const r = rnd();
  c.fillStyle = x % 2
    ? (soft ? (r < .5 ? '#7b7be6' : r < .8 ? '#c9c9d4' : '#2c2cf0') : (band > .6 ? '#2020f5' : r < .35 ? '#2a2ee8' : r < .7 ? '#2c3450' : '#7b7be0'))
    : (soft ? (r < .55 ? '#b9b9d8' : r < .8 ? '#5a5ae6' : '#f2f2f2') : (r < .65 ? '#f4f4f4' : r < .85 ? '#8f93a4' : '#3c3ce6'));
  const y = Math.round(at(ground, x));
  c.fillRect(x, y, 1, 230 - y);
}
const stroke = (p, col) => { c.strokeStyle = col; c.beginPath(); for (let i = 0; i < p.length; i += 2) c.lineTo(p[i] + .5, p[i + 1] + .5); c.stroke(); };
stroke(ground.slice(0, -2), '#e01010');
c.setLineDash([3, 5]); stroke(ground.slice(0, -2), '#13a013'); c.setLineDash([]);
c.lineWidth = 2; stroke(mid, '#ffffff'); c.lineWidth = 1;
[[186,133,190,133,190,147],[262,175,277,175,277,187],[284,188,284,196,297,196],[300,203,308,203,308,218],[398,217,398,205,410,205],[402,217,402,205],[420,196,420,185,434,185],[494,156,494,146,507,146],[538,141,538,131,545,131,545,127,557,127],[560,126,560,114,574,114]].forEach(p => stroke(p, '#f01010'));
c.fillStyle = '#d9dbde'; c.fillRect(0, 229, 685, 2);
const noise = (x, y, w, h, cols) => { for (let i = 0; i < w; i++) for (let j = 0; j < h; j++) { const k = cols[Math.floor(rnd() * cols.length)]; if (k) { c.fillStyle = k; c.fillRect(x + i, y + j, 1, 1); } } };
const W = '#fff', B = '#1a1aff', M = '#f030f0', R = '#f02020', G = '#a8a8a8', D = '#212830';
for (let i = 0; i < 22; i++) {
  const x = Math.round(313 + i * 17.5), h = 8 + Math.floor(rnd() * 3);
  noise(x, 309 - h, Math.min(13, 685 - x), h, [W, W, W, W, G, G, M, B, R, D]);
  c.fillStyle = '#b5b5b5'; c.fillRect(x, 308, 13, 2);
  const x2 = x + 3;
  noise(x2, 318, 14, 10, [W, W, W, W, W, G, G, M, B]);
  c.strokeStyle = '#eee'; c.strokeRect(x2 + .5, 317.5, 13, 11);
  c.fillStyle = '#e04040'; c.fillRect(x2 + 12, 319, 2, 9);
}
for (let i = 0; i < 34; i++) {
  const x = Math.round(95 + i * 17.5), h = 8 + Math.floor(rnd() * 4);
  noise(x, 436 - h, 11, h, [W, W, W, B, B, D, M]);
  c.fillStyle = G; c.fillRect(x, 436, 10, 1);
}
for (let x = 93; x < 684; x += 14) {
  for (let i = 0; i < 9; i += 2) { const h = 3 + Math.floor(rnd() * 5); c.fillStyle = '#0000e6'; c.fillRect(x + i, 487 - h, 1, h); }
  noise(x, 481, 9, 5, ['#0000e6', 0, 0, 0]); noise(x + 3, 479, 4, 2, [W, 0, 0, 0, 0, 0]);
}
c.strokeStyle = '#e4e4e4'; c.lineWidth = 2;
for (let x = 627; x < 682; x += 5) c.strokeRect(x, 438, 5, 6);
c.strokeRect(375, 329, 12, 10); c.strokeRect(829, 769, 5, 4);
c.fillStyle = R; c.fillRect(387, 329, 1, 10); c.fillRect(834, 769, 1, 5);
c.fillStyle = '#ddd'; c.fillRect(601, 525, 3, 3);

const boxes = [[65,410,225,570,65],[75,415,190,500,40],[130,440,250,575,45],[202,570,353,570,62],[225,575,330,575,40],[300,520,325,605,60],[245,500,320,490,70],[260,520,390,440,80],[300,520,300,600,50],[320,445,470,440,60],[270,545,400,420,35],[385,420,480,470,45],[430,465,560,500,50],[460,440,500,490,40],[480,460,560,470,50],[510,475,620,560,45],[560,500,650,580,55],[570,600,705,505,65],[595,405,625,530,60],[600,420,635,585,35],[610,430,735,520,35],[660,450,730,550,70],[670,400,745,410,70],[680,420,740,515,60],[700,410,780,480,45],[690,430,720,515,45],[785,335,770,450,50],[825,340,780,480,50],[780,350,900,375,50],[815,400,930,395,60],[870,340,885,405,30],[810,250,890,380,55],[835,120,835,330,30],[845,150,850,295,60],[865,150,815,290,45],[845,200,840,320,30],[755,130,820,70,65],[770,100,810,150,60],[800,80,880,180,65],[820,70,1085,110,60],[825,80,960,100,40],[880,95,1140,110,30],[935,95,1000,98,60],[1000,105,1080,110,30],[1050,100,1180,130,80],[1140,95,1200,225,40],[1120,145,1205,275,50],[1145,120,1180,240,30],[1150,230,1215,210,40],[1190,260,1265,255,40],[1190,225,1290,320,60],[1240,250,1280,340,40],[1240,300,1315,435,60],[1265,310,1300,420,30]];
let s = '';
for (const [x1, y1, x2, y2, w] of boxes) {
  const l = Math.hypot(x2 - x1, y2 - y1), a = Math.atan2(y2 - y1, x2 - x1) * 180 / Math.PI;
  s += `<rect x="0" y="${-w / 2}" width="${l}" height="${w}" transform="translate(${x1} ${y1}) rotate(${a})"/>`;
}
document.getElementById('route').innerHTML = `<g fill="none" stroke="#e8e8e8" stroke-width="4">${s}</g><polyline fill="none" stroke="#f00" stroke-width="14" stroke-linejoin="round" stroke-linecap="round" points="93,438 118,448 135,458 148,480 165,498 185,507 200,535 215,555 240,566 270,572 318,575 285,568 275,548 300,555 302,530 280,503 320,512 330,480 350,478 380,430 410,435 440,465 470,472 475,452 510,480 560,495 585,510 600,545 620,548 632,575 645,540 595,435 640,470 685,515 695,480 715,505 700,430 725,415 745,440 755,470 790,455 800,405 815,355 850,360 892,385 870,335 845,318 850,290 838,262 842,230 832,200 845,150 835,130 860,128 835,115 800,105 778,118 785,135 800,122 830,125 832,85 845,75 890,98 950,95 1000,107 1030,108 1050,98 1075,110 1125,102 1150,125 1145,150 1165,200 1180,245 1200,250 1222,270 1230,250 1245,250 1262,275 1265,340 1290,370 1297,410 1305,418"/>`;
```
